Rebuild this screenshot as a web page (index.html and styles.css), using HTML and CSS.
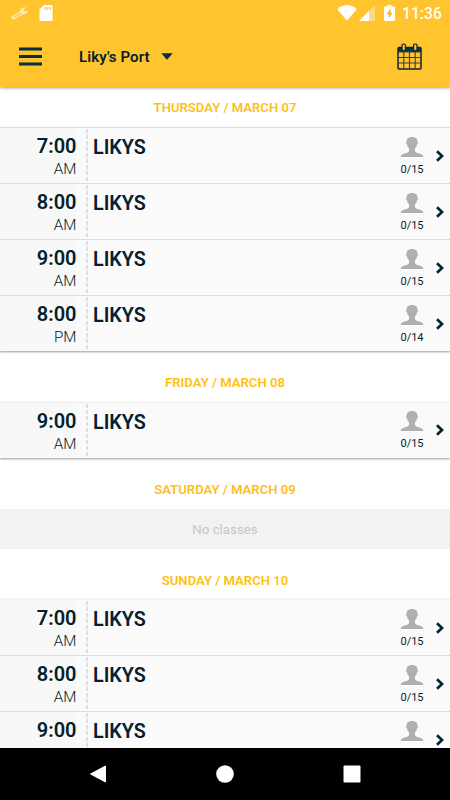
FILE: index.html
```html
<!DOCTYPE html>
<html lang="en">
<head>
  <meta charset="UTF-8" />
  <meta name="viewport" content="width=device-width, initial-scale=1.0"/>
  <title>Liky's Port</title>
  <link rel="stylesheet" href="styles.css">
</head>
<body>

  <svg class="defs" width="0" height="0">
    <symbol id="person" viewBox="0 0 24 22">
      <path fill="#afafaf" d="M12 1C8.700 1 6.500 2.900 6.500 5.700c-.7.300-.5 2.200.4 2.600.4 2 1.200 3.100 2.200 4.100v2.300c-.6 1.900-2.900 2.300-5.100 3-2 .6-3.200 1.300-3.200 3.300h22.400c0-2-1.200-2.700-3.200-3.300-2.200-.7-4.500-1.100-5.100-3v-2.300c1-1 1.800-2.100 2.200-4.100.9-.4 1.100-2.300.4-2.600C17.500 2.900 15.300 1 12 1z"/>
    </symbol>
    <symbol id="chevron" viewBox="0 0 10 12">
      <path d="M2 1.300 7 6 2 10.700" fill="none" stroke="#03212e" stroke-width="2.700"/>
    </symbol>
  </svg>

  <header class="header">
    <div class="status">
      <svg class="wrench" width="18" height="16" viewBox="0 0 18 16">
        <path d="M2.500 12.500 11.500 7.300" stroke="#ffe7ad" stroke-width="4.200" stroke-linecap="round"/>
        <path d="M3.500 12 11 7.700" stroke="#ffc42e" stroke-width="1.200" stroke-linecap="round"/>
        <path fill="#ffe7ad" d="M9 6.500C9.300 3.500 12 1.600 14.800 2.400L12.700 4.700l1.100 1.700 3.300-.7c-.5 3-3.300 4.600-6 3.600z"/>
      </svg>
      <svg class="sdcard" width="14" height="16" viewBox="0 0 14 16">
        <path fill="#fff" d="M5 0h7.300A1.300 1.300 0 0 1 13.600 1.300v13.400A1.300 1.300 0 0 1 12.300 16H1.800A1.300 1.300 0 0 1 .5 14.700V4.600z"/>
        <path d="M6.200 2v3M8.700 2v3M11.200 2v3" stroke="#ffc42e" stroke-width="1.300"/>
      </svg>
      <svg class="wifi" width="20" height="16" viewBox="0 0 20 16">
        <path fill="#fff" d="M.3 4.300C6-1.300 14-1.300 19.700 4.300L10 15.800z"/>
      </svg>
      <svg class="signal" width="16" height="16" viewBox="0 0 16 16">
        <path fill="#ffd97f" d="M16 0v16H0z"/>
        <path fill="#fff" d="M10 6v10H0z"/>
      </svg>
      <svg class="battery" width="11" height="16" viewBox="0 0 11 16">
        <path fill="#fff" d="M3.400 0h4.200v1.500h2.200c.7 0 1.200.5 1.200 1.200v12.100c0 .7-.5 1.200-1.200 1.200H1.200C.5 16 0 15.500 0 14.800V2.700c0-.7.500-1.200 1.200-1.200h2.200z"/>
        <path fill="#ffb900" d="M6.700 3.500 2.500 9.300h2.300v4.300l4-5.900H6.500z"/>
      </svg>
      <span class="clock">11:36</span>
    </div>
    <div class="toolbar">
      <svg class="menu" width="23" height="19" viewBox="0 0 23 19">
        <path d="M0 2h23M0 9.500h23M0 17h23" stroke="#062f40" stroke-width="3.200"/>
      </svg>
      <span class="place">Liky's Port</span>
      <svg class="caret" width="12" height="7" viewBox="0 0 12 7">
        <path fill="#062f40" d="M.3.300h11.400L6.600 6.200q-.6.600-1.200 0z"/>
      </svg>
      <svg class="calendar" width="25" height="27" viewBox="0 0 25 27">
        <path fill="#03394a" d="M1 4h23v5H1z"/>
        <rect x="1" y="4.500" width="23" height="21.500" rx="1" fill="none" stroke="#0b2434" stroke-width="1.500"/>
        <path d="M1 9h23M6.800 9v17M12.500 9v17M18.200 9v17M1 14.500h23M1 20h23" stroke="#3b4133" stroke-width="1.100"/>
        <rect x="5" y="1" width="3.400" height="6.500" rx="1.300" fill="#ffc42e" stroke="#0b2434" stroke-width="1.200"/>
        <rect x="16.600" y="1" width="3.400" height="6.500" rx="1.300" fill="#ffc42e" stroke="#0b2434" stroke-width="1.200"/>
      </svg>
    </div>
  </header>

  <main class="schedule">
    <h2 class="day first">THURSDAY / MARCH 07</h2>
    <div class="classes">
      <div class="row">
        <div class="time"><b>7:00</b><span>AM</span></div>
        <div class="name">LIKYS</div>
        <div class="spots"><svg width="24" height="22"><use href="#person"/></svg><span>0/15</span></div>
        <svg class="chevron" width="10" height="12"><use href="#chevron"/></svg>
      </div>
      <div class="row">
        <div class="time"><b>8:00</b><span>AM</span></div>
        <div class="name">LIKYS</div>
        <div class="spots"><svg width="24" height="22"><use href="#person"/></svg><span>0/15</span></div>
        <svg class="chevron" width="10" height="12"><use href="#chevron"/></svg>
      </div>
      <div class="row">
        <div class="time"><b>9:00</b><span>AM</span></div>
        <div class="name">LIKYS</div>
        <div class="spots"><svg width="24" height="22"><use href="#person"/></svg><span>0/15</span></div>
        <svg class="chevron" width="10" height="12"><use href="#chevron"/></svg>
      </div>
      <div class="row">
        <div class="time"><b>8:00</b><span>PM</span></div>
        <div class="name">LIKYS</div>
        <div class="spots"><svg width="24" height="22"><use href="#person"/></svg><span>0/14</span></div>
        <svg class="chevron" width="10" height="12"><use href="#chevron"/></svg>
      </div>
    </div>

    <h2 class="day">FRIDAY / MARCH 08</h2>
    <div class="classes light">
      <div class="row">
        <div class="time"><b>9:00</b><span>AM</span></div>
        <div class="name">LIKYS</div>
        <div class="spots"><svg width="24" height="22"><use href="#person"/></svg><span>0/15</span></div>
        <svg class="chevron" width="10" height="12"><use href="#chevron"/></svg>
      </div>
    </div>

    <h2 class="day">SATURDAY / MARCH 09</h2>
    <div class="empty">No classes</div>

    <h2 class="day">SUNDAY / MARCH 10</h2>
    <div class="classes light">
      <div class="row">
        <div class="time"><b>7:00</b><span>AM</span></div>
        <div class="name">LIKYS</div>
        <div class="spots"><svg width="24" height="22"><use href="#person"/></svg><span>0/15</span></div>
        <svg class="chevron" width="10" height="12"><use href="#chevron"/></svg>
      </div>
      <div class="row">
        <div class="time"><b>8:00</b><span>AM</span></div>
        <div class="name">LIKYS</div>
        <div class="spots"><svg width="24" height="22"><use href="#person"/></svg><span>0/15</span></div>
        <svg class="chevron" width="10" height="12"><use href="#chevron"/></svg>
      </div>
      <div class="row">
        <div class="time"><b>9:00</b></div>
        <div class="name">LIKYS</div>
        <div class="spots"><svg width="24" height="22"><use href="#person"/></svg></div>
        <svg class="chevron" width="10" height="12"><use href="#chevron"/></svg>
      </div>
    </div>
  </main>

  <nav class="navbar">
    <svg width="18" height="18" viewBox="0 0 18 18">
      <path fill="#fff" stroke="#fff" stroke-linejoin="round" d="M1.500 9 16.500 1v16z"/>
    </svg>
    <svg width="18" height="18" viewBox="0 0 18 18">
      <circle cx="9" cy="9" r="8.800" fill="#fff"/>
    </svg>
    <svg width="18" height="18" viewBox="0 0 18 18">
      <rect x=".5" y=".5" width="17" height="17" rx="1" fill="#fff"/>
    </svg>
  </nav>

</body>
</html>
```

FILE: styles.css
```css
body {
  margin: 0;
  width: 450px;
  height: 800px;
  overflow: hidden;
  display: flex;
  flex-direction: column;
  font-family: Roboto, sans-serif;
  color: #03212e;
  background: #fff;
}

svg {
  display: block;
  flex: none;
}

.defs {
  position: absolute;
}

.header {
  flex: none;
  height: 87px;
  background: #ffc42e;
  box-shadow: 0 1px 3px rgba(0, 0, 0, 0.4);
  z-index: 1;
}

.status {
  display: flex;
  align-items: center;
  height: 26px;
  padding: 0 9px 0 11px;
}

.sdcard {
  margin-left: 10px;
}

.wifi {
  margin-left: auto;
}

.signal {
  margin-left: 2px;
}

.battery {
  margin-left: 9px;
}

.clock {
  margin-left: 7px;
  width: 39px;
  padding-top: 2px;
  font-size: 15.7px;
  line-height: 20px;
  font-weight: 500;
  color: #fff;
  white-space: nowrap;
}

.toolbar {
  display: flex;
  align-items: center;
  height: 61px;
  padding: 0 28px 0 19px;
}

.place {
  margin-left: 37px;
  padding-top: 1px;
  font-size: 15px;
  font-weight: 600;
  letter-spacing: 0.1px;
}

.caret {
  margin-left: 11px;
}

.calendar {
  margin-left: auto;
}

.schedule {
  height: 661px;
  overflow: hidden;
}

.day {
  margin: 0;
  height: 50.75px;
  padding-top: 21px;
  box-sizing: border-box;
  font-size: 13.1px;
  line-height: 21px;
  font-weight: 600;
  text-align: center;
  color: #ffbf12;
}

.day.first {
  height: 40px;
  padding-top: 10px;
}

.classes {
  box-shadow: 0 1px 2px rgba(0, 0, 0, 0.4);
}

.row {
  display: flex;
  height: 56px;
  box-sizing: border-box;
  border-top: 1px solid #dcdcdc;
  background: #fafafa;
}

.light .row:first-child {
  border-top-color: #f0f0f0;
}

.time {
  width: 76.5px;
  margin-right: 9.5px;
  padding-top: 6px;
  box-sizing: border-box;
  text-align: right;
  background: #f8f8f8;
}

.time b {
  display: block;
  font-size: 20px;
  line-height: 24px;
  font-weight: 600;
}

.time span {
  display: block;
  font-size: 15.2px;
  line-height: 22px;
  font-weight: 350;
}

.name {
  flex: 1;
  margin-top: 1px;
  padding: 7px 0 0 7px;
  font-size: 19.7px;
  line-height: 24px;
  font-weight: 600;
  background: repeating-linear-gradient(#dedede 0 4px, transparent 4px 6px) left top / 2px 100% no-repeat;
}

.spots {
  width: 24px;
  padding-top: 7.5px;
  font-size: 11px;
  line-height: 14px;
  text-align: center;
}

.spots span {
  display: block;
  margin-top: 5px;
}

.chevron {
  margin: 21.5px 5px 0 11px;
}

.empty {
  height: 40px;
  line-height: 41px;
  font-size: 13.3px;
  text-align: center;
  color: #c6c6c6;
  background: #f2f2f2;
}

.navbar {
  flex: none;
  display: flex;
  justify-content: center;
  align-items: center;
  gap: 109px;
  height: 52px;
  background: #000;
}
```
